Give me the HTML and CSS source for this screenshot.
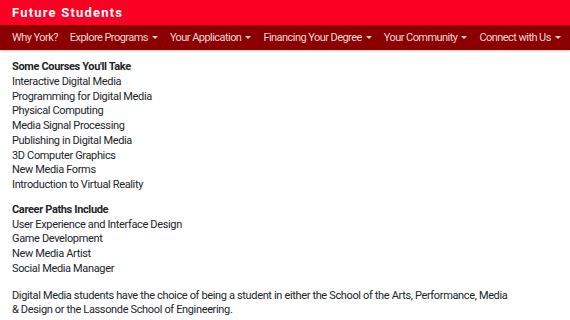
FILE: index.html
```html
<!DOCTYPE html>
<html lang="en">
<head>
    <meta charset="UTF-8">
    <meta name="viewport" content="width=device-width, initial-scale=1.0">
    <title>Future Students</title>
    <link rel="stylesheet" href="styles.css">
</head>
<body class="page">
    <header class="topbar">
        <div class="topbar__title">Future Students</div>
    </header>
    <nav class="menu">
        <a class="menu__link" href="#">Why York?</a>
        <a class="menu__link menu__link--drop" href="#">Explore Programs</a>
        <a class="menu__link menu__link--drop" href="#">Your Application</a>
        <a class="menu__link menu__link--drop" href="#">Financing Your Degree</a>
        <a class="menu__link menu__link--drop" href="#">Your Community</a>
        <a class="menu__link menu__link--drop" href="#">Connect with Us</a>
    </nav>

    <main class="content">
        <div class="block">
            <p class="block__title">Some Courses You'll Take</p>
            <p>Interactive Digital Media</p>
            <p>Programming for Digital Media</p>
            <p>Physical Computing</p>
            <p>Media Signal Processing</p>
            <p>Publishing in Digital Media</p>
            <p>3D Computer Graphics</p>
            <p>New Media Forms</p>
            <p>Introduction to Virtual Reality</p>
        </div>

        <div class="block">
            <p class="block__title">Career Paths Include</p>
            <p>User Experience and Interface Design</p>
            <p>Game Development</p>
            <p>New Media Artist</p>
            <p>Social Media Manager</p>
        </div>

        <p class="content__text">Digital Media students have the choice of being a student in either the School of the Arts, Performance, Media &amp; Design or the Lassonde School of Engineering.</p>
    </main>
</body>
</html>
```

FILE: styles.css
```css
body{
    font-family: Roboto, sans-serif;
    margin: 0;
    color: #212529;
}
*, ::after, ::before {
    box-sizing: border-box;
}
p{
    margin: 0;
}
.topbar{
    background: #fc0023;
    height: 25px;
    padding: 0 12px;
    display: flex;
    align-items: center;
}
.topbar__title{
    color: #fff;
    font-weight: bold;
    font-size: 13px;
    letter-spacing: 1.2px;
}
.menu{
    background: #8b0000;
    height: 25px;
    padding: 0 12px;
    display: flex;
    align-items: center;
    gap: 12px;
    box-shadow: 0 1px 2px rgba(0, 0, 0, .25);
}
.menu__link{
    color: #f1d6d6;
    text-decoration: none;
    font-size: 11px;
    letter-spacing: -0.55px;
    white-space: nowrap;
}
.menu__link--drop::after{
    content: "";
    display: inline-block;
    margin-left: 4px;
    vertical-align: 2px;
    border-top: 3.5px solid;
    border-left: 3px solid transparent;
    border-right: 3px solid transparent;
}
.content{
    padding: 10px 12px;
    font-size: 11px;
    letter-spacing: -0.35px;
    line-height: 14.75px;
    max-width: 528px;
}
.block{
    margin-bottom: 10px;
}
.block__title{
    font-weight: bold;
}
.content__text{
    margin-top: 12px;
}
```
